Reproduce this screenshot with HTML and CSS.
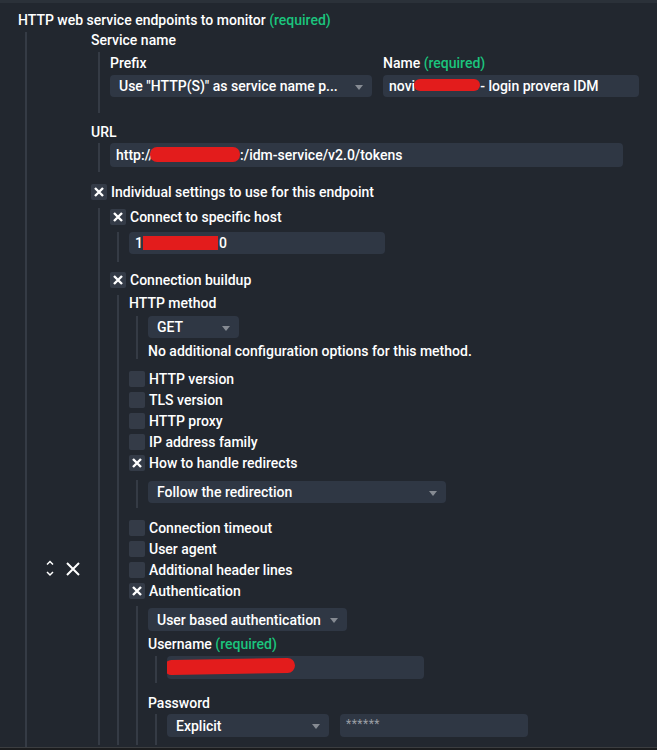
FILE: index.html
```html
<!DOCTYPE html>
<html>
<head>
<meta charset="utf-8">
<link rel="stylesheet" href="styles.css">
</head>
<body>
<div class="page">
  <div class="topbar"></div>
  <div class="main">
    <div class="title">HTTP web service endpoints to monitor <span class="req">(required)</span></div>
    <div class="list">
      <div class="item">
        <div class="controls">
          <svg class="ico-updown" width="8" height="18" viewBox="0 0 8 18"><path d="M1 5.5L4 2.5L7 5.5M1 13L4 16L7 13" fill="none" stroke="#fff" stroke-width="1.5"/></svg>
          <svg class="ico-del" width="14" height="14" viewBox="0 0 14 14"><path d="M1 1L13 13M13 1L1 13" fill="none" stroke="#fff" stroke-width="2"/></svg>
        </div>
        <div class="content">
          <div class="label">Service name</div>
          <div class="sub sub-service">
            <div class="cols">
              <div class="col">
                <div class="label">Prefix</div>
                <div class="select w-prefix"><span>Use "HTTP(S)" as service name p...</span></div>
              </div>
              <div class="col">
                <div class="label">Name <span class="req">(required)</span></div>
                <div class="input w-name">novi<span class="redact r-name"></span>- login provera IDM</div>
              </div>
            </div>
          </div>

          <div class="label l-url">URL</div>
          <div class="sub sub-url">
            <div class="input w-url">http://<span class="redact r-url"></span>:/idm-service/v2.0/tokens</div>
          </div>

          <div class="check c-indiv"><span class="box on"><svg width="16" height="16" viewBox="0 0 16 16"><path d="M4 4L12 12M12 4L4 12" stroke="#fff" stroke-width="2.4"/></svg></span>Individual settings to use for this endpoint</div>
          <div class="sub sub-indiv">
            <div class="check"><span class="box on"><svg width="16" height="16" viewBox="0 0 16 16"><path d="M4 4L12 12M12 4L4 12" stroke="#fff" stroke-width="2.4"/></svg></span>Connect to specific host</div>
            <div class="sub sub-host">
              <div class="input w-host">1<span class="redact r-host"></span>0</div>
            </div>
            <div class="check c-conn"><span class="box on"><svg width="16" height="16" viewBox="0 0 16 16"><path d="M4 4L12 12M12 4L4 12" stroke="#fff" stroke-width="2.4"/></svg></span>Connection buildup</div>
            <div class="sub sub-conn">
              <div class="label">HTTP method</div>
              <div class="sub sub-method">
                <div class="select w-get"><span>GET</span></div>
                <div class="note">No additional configuration options for this method.</div>
              </div>
              <div class="check c-first"><span class="box"></span>HTTP version</div>
              <div class="check c-next"><span class="box"></span>TLS version</div>
              <div class="check c-next"><span class="box"></span>HTTP proxy</div>
              <div class="check c-next"><span class="box"></span>IP address family</div>
              <div class="check c-next"><span class="box on"><svg width="16" height="16" viewBox="0 0 16 16"><path d="M4 4L12 12M12 4L4 12" stroke="#fff" stroke-width="2.4"/></svg></span>How to handle redirects</div>
              <div class="sub sub-redir">
                <div class="select w-follow"><span>Follow the redirection</span></div>
              </div>
              <div class="check c-first"><span class="box"></span>Connection timeout</div>
              <div class="check c-next"><span class="box"></span>User agent</div>
              <div class="check c-next"><span class="box"></span>Additional header lines</div>
              <div class="check c-next"><span class="box on"><svg width="16" height="16" viewBox="0 0 16 16"><path d="M4 4L12 12M12 4L4 12" stroke="#fff" stroke-width="2.4"/></svg></span>Authentication</div>
              <div class="sub sub-auth">
                <div class="select w-auth"><span>User based authentication</span></div>
                <div class="label l-user">Username <span class="req">(required)</span></div>
                <div class="sub sub-user">
                  <div class="input w-user"><span class="redact r-user"></span></div>
                </div>
                <div class="label l-pass">Password</div>
                <div class="sub sub-pass">
                  <div class="pwrow">
                    <div class="select w-explicit"><span>Explicit</span></div>
                    <div class="input w-pass"><span class="stars">******</span></div>
                  </div>
                </div>
              </div>
            </div>
          </div>
        </div>
      </div>
    </div>
  </div>
  <div class="bottombar"></div>
</div>
</body>
</html>
```
FILE: styles.css
```css
* { box-sizing: border-box; }
html, body { margin: 0; padding: 0; }
body {
  background: #22272f;
  color: #ffffff;
  font-family: Roboto, "Liberation Sans", sans-serif;
  font-size: 14px;
  font-weight: 500;
  line-height: 16px;
}
.page {
  width: 657px;
  height: 750px;
  overflow: hidden;
  display: flex;
  flex-direction: column;
}
.topbar { height: 3px; background: #2b3139; flex: none; }
.bottombar {
  height: 3px;
  flex: none;
  border-top: 1px solid #3b3d40;
  background: #1b1c1e;
}
.main {
  flex: 1;
  overflow: hidden;
  padding: 9px 0 0 18px;
}
.req { color: #1bc47d; }
.title { height: 16px; white-space: nowrap; }
.list {
  margin: 4px 0 0 7px;
  border-left: 2px solid #353b45;
  min-height: 800px;
}
.item { display: flex; }
.controls {
  width: 64px;
  flex: none;
  display: flex;
  align-items: flex-start;
  padding: 527px 0 0 19px;
  gap: 12px;
}
.ico-updown { display: block; }
.ico-del { display: block; margin-top: 3px; }
.content { flex: 1; min-width: 0; }
.label { height: 16px; white-space: nowrap; }
.sub {
  margin-left: 7px;
  border-left: 2px solid #353b45;
  padding-left: 10px;
}
.sub-service { margin-top: 4px; padding-top: 3px; padding-bottom: 16px; }
.cols { display: flex; gap: 11px; }
.col .label { margin-bottom: 4px; }

.input, .select {
  background: #2f3744;
  border-radius: 4px;
  height: 22px;
  white-space: nowrap;
  overflow: hidden;
}
.input { padding: 3px 6px 0 6px; }
.select {
  display: flex;
  align-items: center;
  justify-content: space-between;
  padding: 0 9px 0 9px;
}
.select::after {
  content: "";
  flex: none;
  width: 0;
  height: 0;
  border-left: 4px solid transparent;
  border-right: 4px solid transparent;
  border-top: 5px solid #868b93;
  margin-top: 2px;
}
.w-prefix { width: 262px; }
.w-name { width: 256px; }
.redact {
  display: inline-block;
  background: #e31c1c;
  vertical-align: middle;
}
.r-name { width: 66px; height: 12px; border-radius: 6px; margin: -4px 0 0 -1px; }
.l-url { margin-top: 11px; }
.sub-url { margin-top: 3px; padding-bottom: 5px; }
.w-url { width: 513px; height: 24px; padding-top: 4px; }
.r-url { width: 90px; height: 15px; border-radius: 7px; margin: -4px 0 0 -4px; }

.check {
  display: flex;
  align-items: center;
  gap: 4px;
  height: 16px;
  white-space: nowrap;
}
.box {
  width: 16px;
  height: 16px;
  flex: none;
  background: #343b47;
  border-radius: 2px;
  display: block;
}
.box svg { display: block; }
.c-indiv { margin-top: 12px; }
.sub-indiv { margin-top: 8px; padding-top: 1px; }
.sub-host { margin-top: 7px; padding-bottom: 8px; }
.w-host { width: 256px; }
.r-host { width: 75px; height: 14px; margin: -3px 1px 0 0; }
.c-conn { margin-top: 10px; }
.sub-conn { margin-top: 7px; }
.sub-method { margin-top: 5px; }
.w-get { width: 91px; }
.note { margin-top: 5px; height: 16px; white-space: nowrap; }
.c-first { margin-top: 12px; }
.c-next { margin-top: 5px; }
.sub-redir { margin-top: 9px; padding-top: 1px; padding-bottom: 5px; }
.w-follow { width: 298px; }
.sub-auth { margin-top: 7px; padding-top: 2px; }
.w-auth { width: 199px; height: 23px; }
.l-user { margin-top: 5px; }
.sub-user { margin-top: 4px; padding-bottom: 4px; }
.w-user { width: 257px; height: 23px; padding-left: 0; }
.r-user { width: 131px; height: 15px; border-radius: 8px; margin: -4px 0 0 -3px; transform: rotate(-1deg); }
.l-pass { margin-top: 12px; }
.sub-pass { margin-top: 3px; padding-bottom: 8px; }
.pwrow { display: flex; gap: 11px; }
.w-explicit { width: 162px; height: 23px; }
.w-pass { width: 188px; height: 23px; padding-top: 1px; }
.stars { color: #9a9ea5; font-size: 12px; letter-spacing: 0.5px; font-weight: 400; }
```
